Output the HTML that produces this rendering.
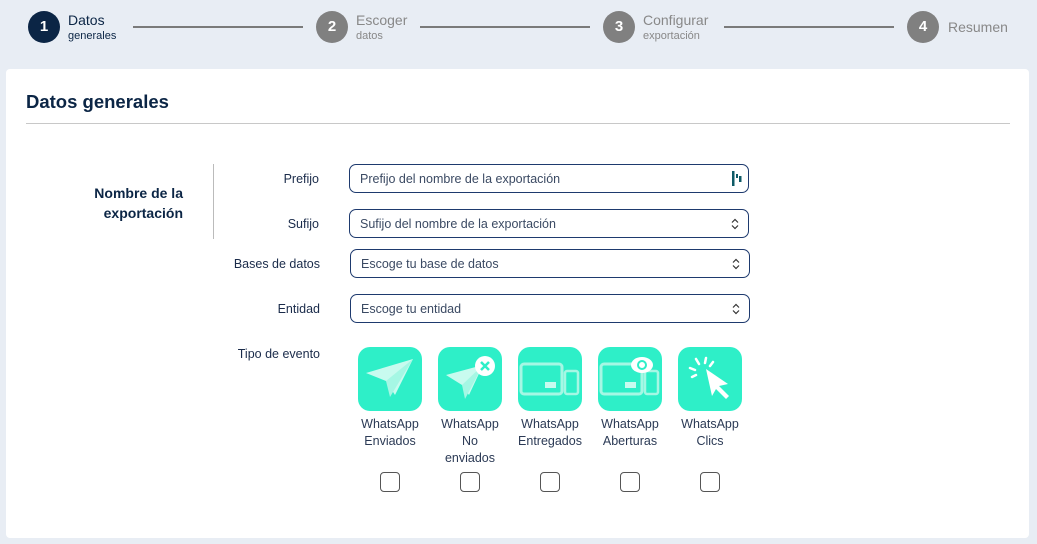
<!DOCTYPE html>
<html><head><meta charset="utf-8"><style>
*{box-sizing:border-box;margin:0;padding:0}
body{width:1037px;height:544px;background:#e8edf4;font-family:"Liberation Sans",sans-serif;position:relative;overflow:hidden;color:#1a2b4a}
.a{position:absolute}
.c{position:absolute;width:32px;height:32px;border-radius:50%;color:#fff;font-weight:bold;font-size:15px;text-align:center;line-height:32px;top:11px}
.ln{position:absolute;top:26px;height:2px;background:#7a7a7a}
.st{position:absolute;font-size:14px;color:#888;top:12px;line-height:16px}
.st small{display:block;font-size:11px;line-height:14px;margin-top:1px}
.card{position:absolute;left:6px;top:69px;width:1023px;height:469px;background:#fff;border-radius:4px}
.lab{position:absolute;font-size:12.5px;color:#1a2b4a;text-align:right;width:200px}
.in{position:absolute;border:1.5px solid #1e3a6e;border-radius:7px;width:400px;height:29px;font-size:12.5px;color:#3b4a63;padding-left:10px;line-height:28px}
.ar{position:absolute;right:9px;top:8px}
.tile{position:absolute;top:347px;width:64px;height:64px;border-radius:12px;background:#2eefc8}
.tl{position:absolute;top:416px;width:90px;text-align:center;font-size:12.5px;line-height:17px;color:#2b3a55}
.cb{position:absolute;top:472px;width:20px;height:20px;border:1.5px solid #555;border-radius:4px}
</style></head><body>
<div class="c" style="left:28px;background:#0b2545">1</div>
<div class="st" style="left:68px;color:#0b2545">Datos<small>generales</small></div>
<div class="ln" style="left:133px;width:170px"></div>
<div class="c" style="left:316px;background:#808080">2</div>
<div class="st" style="left:356px">Escoger<small>datos</small></div>
<div class="ln" style="left:420px;width:170px"></div>
<div class="c" style="left:603px;background:#808080">3</div>
<div class="st" style="left:643px">Configurar<small>exportación</small></div>
<div class="ln" style="left:724px;width:170px"></div>
<div class="c" style="left:907px;background:#808080">4</div>
<div class="st" style="left:948px;top:19px">Resumen</div>

<div class="card"></div>
<div class="a" style="left:26px;top:91px;font-size:18.5px;font-weight:bold;color:#0b2545">Datos generales</div>
<div class="a" style="left:26px;top:123px;width:984px;height:1px;background:#c8c8c8"></div>

<div class="a" style="left:43px;top:183px;width:140px;text-align:right;font-size:14px;font-weight:bold;color:#0b2545;line-height:20px">Nombre de la<br>exportación</div>
<div class="a" style="left:213px;top:164px;width:1px;height:75px;background:#bbb"></div>

<div class="lab" style="left:119px;top:172px">Prefijo</div>
<div class="lab" style="left:119px;top:217px">Sufijo</div>
<div class="lab" style="left:120px;top:257px">Bases de datos</div>
<div class="lab" style="left:120px;top:302px">Entidad</div>
<div class="lab" style="left:120px;top:347px">Tipo de evento</div>

<div class="in" style="left:349px;top:164px">Prefijo del nombre de la exportación<svg class="ar" style="top:6px;right:5px" width="12" height="15" viewBox="0 0 12 15"><rect x="1" y="0" width="2.5" height="15" fill="#0e5a66"/><rect x="5" y="3" width="2" height="4" fill="#0e5a66"/><rect x="8" y="5" width="2.5" height="6" fill="#0e5a66"/></svg></div>
<div class="in" style="left:349px;top:209px">Sufijo del nombre de la exportación<svg class="ar" width="8" height="12" viewBox="0 0 8 12"><path d="M1 4.5L4 1.5 7 4.5M1 7.5L4 10.5 7 7.5" stroke="#333" fill="none" stroke-width="1.2"/></svg></div>
<div class="in" style="left:350px;top:249px">Escoge tu base de datos<svg class="ar" width="8" height="12" viewBox="0 0 8 12"><path d="M1 4.5L4 1.5 7 4.5M1 7.5L4 10.5 7 7.5" stroke="#333" fill="none" stroke-width="1.2"/></svg></div>
<div class="in" style="left:350px;top:294px">Escoge tu entidad<svg class="ar" width="8" height="12" viewBox="0 0 8 12"><path d="M1 4.5L4 1.5 7 4.5M1 7.5L4 10.5 7 7.5" stroke="#333" fill="none" stroke-width="1.2"/></svg></div>

<div class="tile" style="left:358px"><svg width="64" height="64"><path d="M8 26L55 12 37 48 28 34z" fill="#c8fbef"/><path d="M28 34L55 12 32 50z" fill="#a5f7e4"/></svg></div>
<div class="tile" style="left:438px"><svg width="64" height="64"><path d="M8 28L45 18 31 48 24 38z" fill="#c8fbef"/><path d="M24 38L45 18 27 52z" fill="#a5f7e4"/><circle cx="47" cy="19" r="10" fill="#fff"/><path d="M43 15l8 8M51 15l-8 8" stroke="#2eefc8" stroke-width="2.5"/></svg></div>
<div class="tile" style="left:518px"><svg width="64" height="64"><rect x="3" y="17" width="41" height="30" rx="3" fill="none" stroke="#a5f7e4" stroke-width="3"/><rect x="27" y="35" width="11" height="6" fill="#c8fbef"/><rect x="47" y="24" width="13" height="23" rx="2" fill="none" stroke="#a5f7e4" stroke-width="2.5"/></svg></div>
<div class="tile" style="left:598px"><svg width="64" height="64"><rect x="3" y="17" width="41" height="30" rx="3" fill="none" stroke="#a5f7e4" stroke-width="3"/><rect x="27" y="35" width="11" height="6" fill="#c8fbef"/><rect x="47" y="24" width="13" height="23" rx="2" fill="none" stroke="#a5f7e4" stroke-width="2.5"/><ellipse cx="44" cy="18" rx="11" ry="8" fill="#fff"/><circle cx="44" cy="18" r="4" fill="none" stroke="#2eefc8" stroke-width="2"/></svg></div>
<div class="tile" style="left:678px"><svg width="64" height="64"><path d="M28 22L50 37 41 39 51 49 48 52 38 42 34 49z" fill="#fff"/><path d="M18 12l3 5M28 11l-1 5M12 21l5 2M14 30l4-2M35 15l-3 4" stroke="#fff" stroke-width="2.5" stroke-linecap="round"/></svg></div>

<div class="tl" style="left:345px">WhatsApp<br>Enviados</div>
<div class="tl" style="left:425px">WhatsApp<br>No<br>enviados</div>
<div class="tl" style="left:505px">WhatsApp<br>Entregados</div>
<div class="tl" style="left:585px">WhatsApp<br>Aberturas</div>
<div class="tl" style="left:665px">WhatsApp<br>Clics</div>

<div class="cb" style="left:380px"></div>
<div class="cb" style="left:460px"></div>
<div class="cb" style="left:540px"></div>
<div class="cb" style="left:620px"></div>
<div class="cb" style="left:700px"></div>
</body></html>
